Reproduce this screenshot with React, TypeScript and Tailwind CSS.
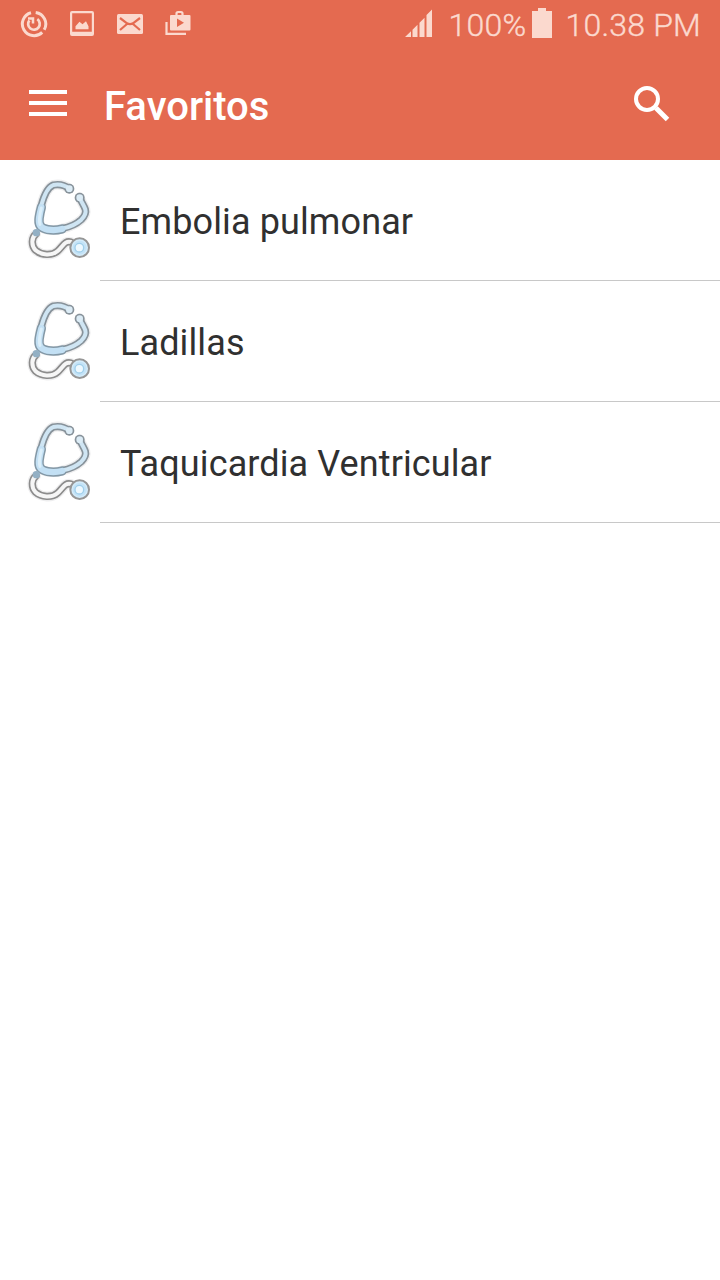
const favorites = ["Embolia pulmonar", "Ladillas", "Taquicardia Ventricular"]

function StethoscopeIcon() {
  const frame =
    "M147 56 C135 46 117 42 100 45 C82 52 72 76 64 106 C58 130 54 155 62 169 C74 182 108 183 126 176 C150 171 172 160 184 149 C195 138 199 129 196 118 C192 106 184 97 179 82"
  const joint = "M64 112 C56 143 53 160 63 170 C76 182 106 182 126 177"
  const tube = "M48 192 C34 202 33 227 47 241 C64 256 96 258 113 243 C130 228 134 211 153 216"

  return (
    <svg viewBox="0 0 240 300" className="h-[100px] w-20 shrink-0" fill="none" strokeLinecap="round" strokeLinejoin="round">
      <g stroke="#eeeeef" strokeWidth="30">
        <path d={frame} />
        <path d={tube} />
      </g>
      {/* Chest tube */}
      <path d={tube} stroke="#8c8c8c" strokeWidth="22" />
      <path d={tube} stroke="#f6f6f6" strokeWidth="12" />
      {/* Ear tubes */}
      <path d={frame} stroke="#87929a" strokeWidth="22" />
      <circle cx="148" cy="56" r="15" fill="#87929a" />
      <circle cx="179" cy="83" r="15" fill="#87929a" />
      <path d={joint} stroke="#8398a6" strokeWidth="28" />
      <path d={frame} stroke="#cfe5f3" strokeWidth="12" />
      <circle cx="148" cy="56" r="10" fill="#dcecf6" />
      <circle cx="179" cy="83" r="10" fill="#dcecf6" />
      <path d={joint} stroke="#c3e0f4" strokeWidth="19" />
      <path d="M64 114 C57 142 56 153 60 163" stroke="#dceffa" strokeWidth="9" />
      <circle cx="49" cy="188" r="11" fill="#93b0c4" />
      {/* Chest piece */}
      <circle cx="179" cy="233" r="28" fill="#d4ecfa" stroke="#969696" strokeWidth="6" />
      <circle cx="179" cy="233" r="21" fill="#c4e3f7" />
      <circle cx="178" cy="233" r="13" fill="#edf8fe" stroke="#a0cfeb" strokeWidth="4" />
    </svg>
  )
}

function StatusBar() {
  return (
    <div className="flex h-[50px] items-start justify-between pr-[19px] pl-5 text-[#fbd9ce]">
      <div className="flex gap-5 pt-[10px]">
        <svg viewBox="0 0 28 28" className="size-7" fill="none" stroke="currentColor" strokeWidth="3">
          <path d="M11 2.7A11.7 11.7 0 1 0 22.2 22.4M15.7 2.4A11.7 11.7 0 0 1 24.2 19.8" />
          <path d="M17.3 9.2A5.8 5.8 0 1 1 9.4 10.3" strokeWidth="2.7" />
          <path d="M8 8.4h5v5" strokeWidth="2.5" />
        </svg>
        <svg viewBox="0 0 28 28" className="size-7" fill="currentColor">
          <path fillRule="evenodd" d="M4 1h20a2 2 0 0 1 2 2v21a2 2 0 0 1-2 2H4a2 2 0 0 1-2-2V3a2 2 0 0 1 2-2Zm.2 2.2v18.6h19.6V3.2Z" />
          <path d="M7.5 19.3v-3l4-4.5 3 2.5 3.5-3 2.5 5v3Z" />
        </svg>
        <svg viewBox="0 0 28 28" className="size-7">
          <rect x="1" y="4" width="26" height="20" rx="1.5" fill="currentColor" />
          <path d="M4 8l7 5.3q3 1.8 6 0L24 8M4 20l7-6M24 20l-7-6" fill="none" stroke="#e46a50" strokeWidth="2.2" />
        </svg>
        <svg viewBox="0 0 28 28" className="size-7">
          <path d="M2.5 12v11.8H22" fill="none" stroke="currentColor" strokeWidth="2.2" />
          <path d="M12.5 7V3.5a1.5 1.5 0 0 1 1.5-1.5h3a1.5 1.5 0 0 1 1.5 1.5V7" fill="none" stroke="currentColor" strokeWidth="2.2" />
          <rect x="6" y="5" width="20.5" height="15.5" rx="1" fill="currentColor" />
          <path d="M13 8.5v8.5l7-4.2Z" fill="#e46a50" />
        </svg>
      </div>

      <div className="flex pt-[9px] text-[32px] leading-8 font-light tracking-[0.2px]">
        <svg viewBox="0 0 28 28" className="mr-4 size-7" fill="currentColor">
          <path d="M0 28 6 22.2V28ZM7.5 28v-7.2l5-5V28ZM14.5 28V13.7l5-5V28ZM21.5 28V6L27 .5V28Z" />
        </svg>
        <span className="w-[83px] [-webkit-text-stroke:0.4px]">100%</span>
        <svg viewBox="0 0 20 30" className="-mt-px mr-[14px] h-[30px] w-5" fill="currentColor">
          <path d="M0 3h6V0h8v3h6v27H0Z" />
        </svg>
        <span className="[-webkit-text-stroke:0.4px]">10.38 PM</span>
      </div>
    </div>
  )
}

export default function App() {
  return (
    <main className="min-h-screen bg-white font-['Roboto',sans-serif]">
      <header className="h-40 bg-[#e46a50]">
        <StatusBar />
        <div className="flex h-[110px] items-center pl-[29px]">
          <button aria-label="Menu" className="mb-[5px] flex w-[38px] flex-col gap-[7px]">
            <span className="h-1 w-full bg-white" />
            <span className="h-1 w-full bg-white" />
            <span className="h-1 w-full bg-white" />
          </button>
          <h1 className="mt-1 ml-[37px] text-[40px] leading-none font-medium text-white">Favoritos</h1>
          <button aria-label="Buscar" className="mr-[50px] mb-0.5 ml-auto">
            <svg viewBox="0 0 36 36" className="size-9" fill="none" stroke="#fff">
              <circle cx="13" cy="13" r="11" strokeWidth="4" />
              <path d="M22 22 33.5 33.5" strokeWidth="5" />
            </svg>
          </button>
        </div>
      </header>

      <ul>
        {favorites.map((name) => (
          <li key={name} className="flex h-[121px] pl-5">
            <div className="pt-[10px]">
              <StethoscopeIcon />
            </div>
            <div className="flex flex-1 items-center border-b border-[#c8c8c8] pt-1 pl-5 text-[36px] tracking-[0.11px] text-[#303030]">
              {name}
            </div>
          </li>
        ))}
      </ul>
    </main>
  )
}
